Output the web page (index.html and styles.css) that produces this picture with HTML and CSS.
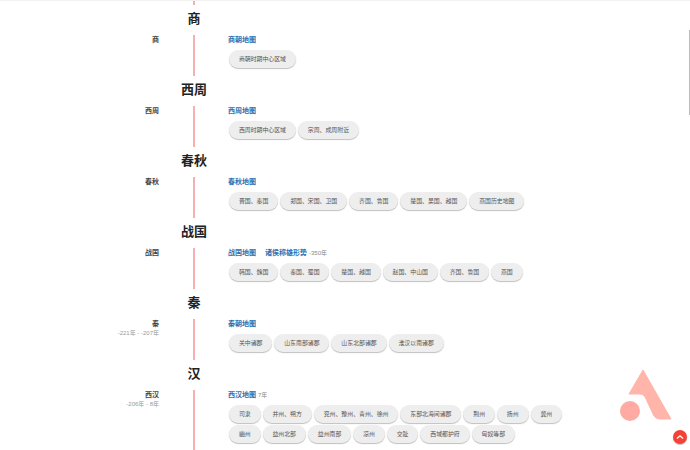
FILE: index.html
```html
<!DOCTYPE html>
<html lang="zh-CN">
<head>
    <meta charset="UTF-8">
    <title>历史地图</title>
    <link rel="stylesheet" href="styles.css">
</head>
<body>
    <div class="timeline">
        <div class="stub"></div>

        <h2 class="era">商</h2>
        <div class="row">
            <div class="when"><b>商</b></div>
            <div class="axis"></div>
            <div class="maps">
                <div class="links"><a href="#">商朝地图</a></div>
                <div class="chips">
                    <span class="chip">商朝时期中心区域</span>
                </div>
            </div>
        </div>

        <h2 class="era">西周</h2>
        <div class="row">
            <div class="when"><b>西周</b></div>
            <div class="axis"></div>
            <div class="maps">
                <div class="links"><a href="#">西周地图</a></div>
                <div class="chips">
                    <span class="chip">西周时期中心区域</span>
                    <span class="chip">宗周、成周附近</span>
                </div>
            </div>
        </div>

        <h2 class="era">春秋</h2>
        <div class="row">
            <div class="when"><b>春秋</b></div>
            <div class="axis"></div>
            <div class="maps">
                <div class="links"><a href="#">春秋地图</a></div>
                <div class="chips">
                    <span class="chip">晋国、秦国</span>
                    <span class="chip">郑国、宋国、卫国</span>
                    <span class="chip">齐国、鲁国</span>
                    <span class="chip">楚国、吴国、越国</span>
                    <span class="chip">燕国历史地图</span>
                </div>
            </div>
        </div>

        <h2 class="era">战国</h2>
        <div class="row">
            <div class="when"><b>战国</b></div>
            <div class="axis"></div>
            <div class="maps">
                <div class="links"><a href="#">战国地图</a><a href="#">诸侯称雄形势</a> <small>-350年</small></div>
                <div class="chips">
                    <span class="chip">韩国、魏国</span>
                    <span class="chip">秦国、蜀国</span>
                    <span class="chip">楚国、越国</span>
                    <span class="chip">赵国、中山国</span>
                    <span class="chip">齐国、鲁国</span>
                    <span class="chip">燕国</span>
                </div>
            </div>
        </div>

        <h2 class="era">秦</h2>
        <div class="row">
            <div class="when"><b>秦</b><small>-221年 - -207年</small></div>
            <div class="axis"></div>
            <div class="maps">
                <div class="links"><a href="#">秦朝地图</a></div>
                <div class="chips">
                    <span class="chip">关中诸郡</span>
                    <span class="chip">山东南部诸郡</span>
                    <span class="chip">山东北部诸郡</span>
                    <span class="chip">淮汉以南诸郡</span>
                </div>
            </div>
        </div>

        <h2 class="era">汉</h2>
        <div class="row row-last">
            <div class="when"><b>西汉</b><small>-206年 - 8年</small></div>
            <div class="axis"></div>
            <div class="maps">
                <div class="links"><a href="#">西汉地图</a> <small>7年</small></div>
                <div class="chips">
                    <span class="chip">司隶</span>
                    <span class="chip">并州、朔方</span>
                    <span class="chip">兖州、豫州、青州、徐州</span>
                    <span class="chip">东部北海间诸郡</span>
                    <span class="chip">荆州</span>
                    <span class="chip">扬州</span>
                    <span class="chip">冀州</span>
                    <span class="chip">幽州</span>
                    <span class="chip">益州北部</span>
                    <span class="chip">益州南部</span>
                    <span class="chip">凉州</span>
                    <span class="chip">交趾</span>
                    <span class="chip">西域都护府</span>
                    <span class="chip">匈奴等部</span>
                </div>
            </div>
        </div>
    </div>

    <div class="scroll-thumb"></div>

    <svg class="logo" width="60" height="60" viewBox="0 0 60 60">
        <path d="M23 1 L9 25 H20 C23 25 25 27 26 30 L33 45 C34 48 37 50 40 50 H51 Z" fill="#ffb5aa" stroke="#ffb5aa" stroke-width="1" stroke-linejoin="round"/>
        <circle cx="10" cy="42" r="10" fill="#ffaaa2"/>
    </svg>

    <a class="to-top" href="#">
        <svg width="8" height="6" viewBox="0 0 8 6"><path d="M1 4.5 L4 1.8 L7 4.5" fill="none" stroke="#fff" stroke-width="1.3"/></svg>
    </a>
</body>
</html>
```

FILE: styles.css
```css
html, body {
    height: 100%;
    overflow: hidden;
}

body {
    margin: 0;
    background-color: #fff;
    color: #333;
    font-family: "Liberation Sans", "Noto Sans CJK SC", sans-serif;
}

.timeline {
    border-top: 1px solid #f2f2f2;
}

.stub {
    width: 2px;
    height: 4px;
    margin-left: 193px;
    background-color: #f7b0b0;
}

.era {
    width: 388px;
    height: 30px;
    margin: 0;
    color: #222;
    font-size: 13px;
    font-weight: bold;
    line-height: 27px;
    text-align: center;
}

.row {
    display: flex;
    height: 41px;
}

.row-last {
    height: 80px;
}

.when {
    display: flex;
    flex-direction: column;
    width: 159px;
    font-size: 7px;
    line-height: 9px;
    text-align: right;
}

.when b {
    color: #444;
}

.when small {
    margin-top: 1px;
    color: #999;
    font-size: 6px;
}

.axis {
    width: 2px;
    margin-left: 34px;
    background-color: #f7b0b0;
}

.maps {
    margin-left: 33px;
}

.links {
    height: 15px;
    font-size: 7px;
    line-height: 9px;
}

.links a {
    margin-right: 9px;
    color: #2a6fb0;
    font-weight: bold;
    text-decoration: none;
}

.links a:has(+ small) {
    margin-right: 0;
}

.links small {
    color: #888;
    font-size: 6px;
}

.chips {
    display: flex;
    flex-wrap: wrap;
    gap: 2px;
    width: 345px;
    margin-left: 1px;
}

.chip {
    height: 18px;
    padding: 0 9.9px;
    border-radius: 9px;
    background-color: #eee;
    box-shadow: 0 1px 1px rgba(0, 0, 0, 0.25);
    color: #555;
    font-size: 5.9px;
    line-height: 18px;
    white-space: nowrap;
}

.scroll-thumb {
    position: fixed;
    top: 30px;
    right: 0;
    width: 1px;
    height: 85px;
    background-color: #bbb;
}

.logo {
    position: fixed;
    left: 620px;
    top: 369px;
}

.to-top {
    position: fixed;
    left: 673px;
    top: 430px;
    display: flex;
    align-items: center;
    justify-content: center;
    width: 14px;
    height: 14px;
    border-radius: 50%;
    background-color: #f44336;
    box-shadow: 0 1px 1px rgba(0, 0, 0, 0.25);
}
```
